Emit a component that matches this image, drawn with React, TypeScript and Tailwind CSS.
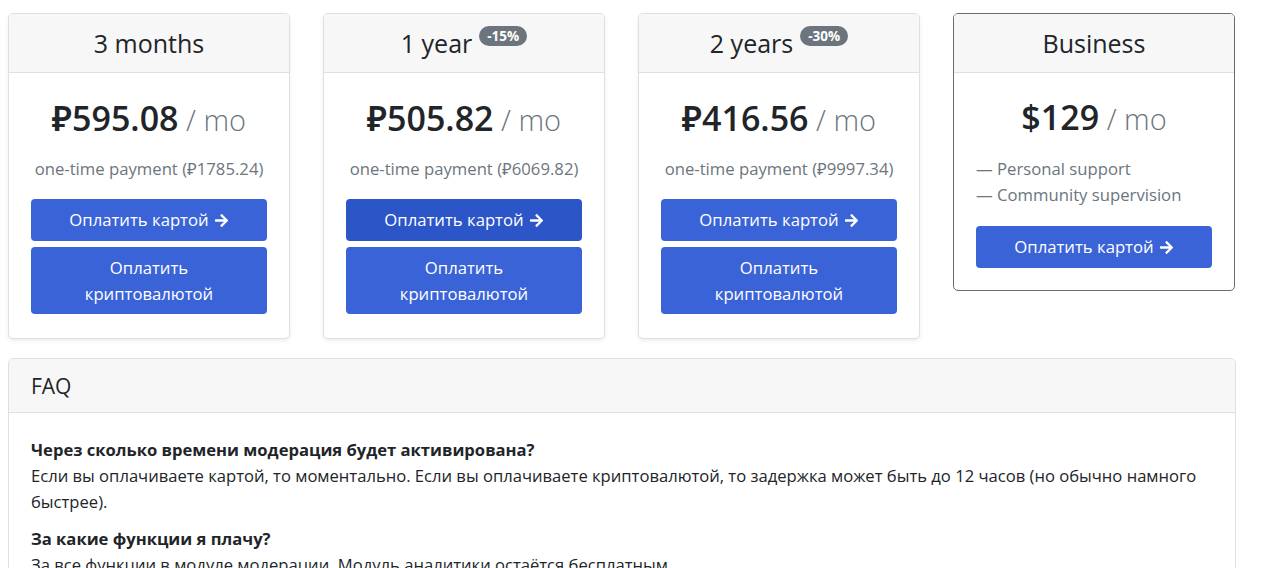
import React from 'react';
import { FaArrowRight } from 'react-icons/fa';

type Plan = {
  title: string;
  badge?: string;
  price: string;
  total: string;
  active?: boolean;
};

const plans: Plan[] = [
  { title: '3 months', price: '₽595.08', total: '₽1785.24' },
  { title: '1 year', badge: '-15%', price: '₽505.82', total: '₽6069.82', active: true },
  { title: '2 years', badge: '-30%', price: '₽416.56', total: '₽9997.34' },
];

const CardButton: React.FC<{ dark?: boolean }> = ({ dark }) => (
  <button
    className={`w-full h-[42px] rounded-[4px] text-white text-[16.7px] flex items-center justify-center gap-[5px] ${
      dark ? 'bg-[#2c55c7]' : 'bg-[#3a63d7]'
    }`}
  >
    Оплатить картой <FaArrowRight className="w-[15px] h-[15px]" />
  </button>
);

const PlanCard: React.FC<{ plan: Plan }> = ({ plan }) => (
  <div className="w-[282px] shrink-0 bg-white border border-[#e0e0e0] rounded-[5px] shadow-[0_2px_4px_rgba(0,0,0,0.075)] overflow-hidden">
    <div className="h-[59px] bg-[#f7f7f7] border-b border-[#e0e0e0] flex items-center justify-center pt-[2px]">
      <span className="text-[25px] text-[#212529]">{plan.title}</span>
      {plan.badge && (
        <span className="ml-[7px] mb-[16px] h-[20px] px-[8px] rounded-full bg-[#6c757d] text-white text-[13.5px] font-bold leading-[20px]">
          {plan.badge}
        </span>
      )}
    </div>
    <div className="px-[22px] pt-[22px] pb-[24px]">
      <div className="h-[46px] leading-[46px] text-center">
        <span className="text-[34px] font-semibold text-[#212529]">{plan.price}</span>
        <span className="text-[29px] font-light text-[#6c757d]"> / mo</span>
      </div>
      <p className="mt-[15px] leading-[26px] text-center text-[16.7px] text-[#6c757d]">
        one-time payment ({plan.total})
      </p>
      <div className="mt-[17px] flex flex-col gap-[6px]">
        <CardButton dark={plan.active} />
        <button className="w-full h-[67px] rounded-[4px] bg-[#3a63d7] text-white text-[16.7px] leading-[26px]">
          Оплатить
          <br />
          криптовалютой
        </button>
      </div>
    </div>
  </div>
);

export default function App() {
  return (
    <div
      className="min-h-screen bg-white pt-[13px] px-[8px] text-[#212529]"
      style={{ fontFamily: '"Open Sans", "Noto Sans", sans-serif' }}
    >
      <div className="w-[1228px] flex items-start gap-[33px]">
        {plans.map((p) => (
          <PlanCard key={p.title} plan={p} />
        ))}
        {/* Business */}
        <div className="w-[282px] shrink-0 bg-white border border-[#6c6c6c] rounded-[5px] overflow-hidden">
          <div className="h-[59px] bg-[#f7f7f7] border-b border-[#e0e0e0] flex items-center justify-center pt-[2px]">
            <span className="text-[25px] text-[#212529]">Business</span>
          </div>
          <div className="px-[22px] pt-[21px] pb-[22px]">
            <div className="h-[46px] leading-[46px] text-center">
              <span className="text-[34px] font-semibold text-[#212529]">$129</span>
              <span className="text-[29px] font-light text-[#6c757d]"> / mo</span>
            </div>
            <ul className="mt-[16px] text-[16.7px] leading-[26px] text-[#6c757d]">
              <li>— Personal support</li>
              <li>— Community supervision</li>
            </ul>
            <div className="mt-[18px]">
              <CardButton />
            </div>
          </div>
        </div>
      </div>

      {/* FAQ */}
      <div className="mt-[19px] w-[1228px] bg-white border border-[#e0e0e0] rounded-[5px] overflow-hidden">
        <div className="h-[54px] bg-[#f7f7f7] border-b border-[#e0e0e0] flex items-center px-[22px] pt-[2px]">
          <h5 className="text-[21px] text-[#212529]">FAQ</h5>
        </div>
        <div className="px-[22px] pt-[24px] pb-[22px] text-[16.6px] leading-[26px] text-[#212529]">
          <p className="font-bold">Через сколько времени модерация будет активирована?</p>
          <p className="mb-[11px]">
            Если вы оплачиваете картой, то моментально. Если вы оплачиваете криптовалютой, то задержка может быть до 12 часов (но обычно намного быстрее).
          </p>
          <p className="font-bold">За какие функции я плачу?</p>
          <p className="mb-[11px]">За все функции в модуле модерации. Модуль аналитики остаётся бесплатным.</p>
        </div>
      </div>
    </div>
  );
}
